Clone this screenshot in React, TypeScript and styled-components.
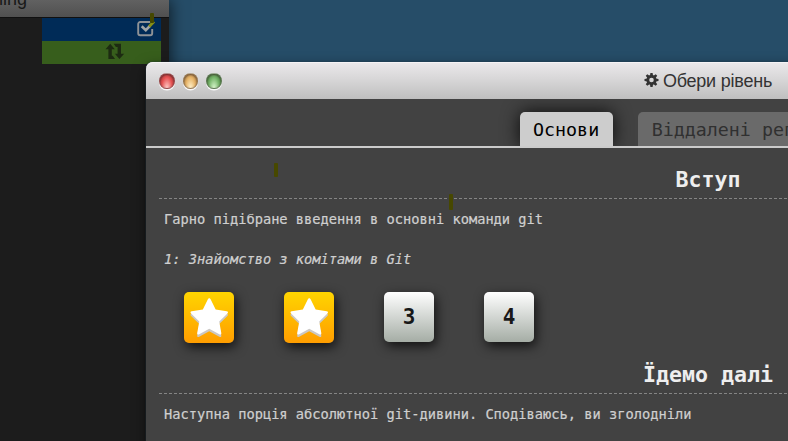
import React from "react";
import styled, { createGlobalStyle } from "styled-components";

const mono = '"DejaVu Sans Mono", monospace';
const sans = '"Liberation Sans", Arial, sans-serif';

const GlobalStyle = createGlobalStyle`
  * { box-sizing: border-box; }
  html, body { margin: 0; overflow: hidden; }
`;

const Desktop = styled.div`
  position: relative;
  width: 788px;
  height: 441px;
  overflow: hidden;
  background: #264d68;
`;

const Terminal = styled.div`
  width: 169px;
  height: 441px;
  background: #1c1c1c;
  box-shadow: 2px 0 14px rgba(0, 0, 0, 0.6);
`;

const TerminalBar = styled.div`
  height: 18px;
  overflow: hidden;
  background: linear-gradient(#616161, #505050);
  border-bottom: 1px solid #101010;
  font: 18px/20px ${sans};
  color: #181818;
`;

const TerminalTitle = styled.div`
  margin: -11px 0 0 -7px;
`;

const Command = styled.div<{ $color: string; $inset: number }>`
  display: flex;
  justify-content: flex-end;
  align-items: flex-start;
  width: 119px;
  height: 23px;
  margin-left: 42px;
  padding-right: ${(p) => p.$inset}px;
  background: ${(p) => p.$color};
  svg { display: block; }
`;

const Dialog = styled.div`
  position: absolute;
  left: 146px;
  top: 62px;
  width: 1124px;
  height: 500px;
  border-radius: 7px 7px 0 0;
  background: #424242;
  box-shadow: 0 0 1px #5684a5, 0 0 2px rgba(0, 0, 0, 0.6), 0 5px 14px rgba(0, 0, 0, 0.55);
`;

const TitleBar = styled.div`
  display: grid;
  grid-template-columns: 1fr auto 1fr;
  align-items: center;
  height: 37px;
  border-radius: 7px 7px 0 0;
  background: linear-gradient(#ebe9eb, #d6d5d6 50%, #bfbfbf);
  box-shadow: inset 0 1px #f5f3f5;
`;

const Lights = styled.div`
  display: flex;
  gap: 8px;
  padding: 1px 0 0 13px;
`;

const Light = styled.div<{ $top: string; $mid: string; $low: string }>`
  width: 15.5px;
  height: 16px;
  border: 1px solid rgba(90, 80, 80, 0.45);
  border-radius: 50%;
  background: radial-gradient(ellipse at 50% 105%, ${(p) => p.$low} 5%, ${(p) => p.$mid} 55%, ${(p) => p.$top} 100%);
  box-shadow: 0 1.5px 0.5px #f8f8f8, inset 0 1px 2px rgba(50, 30, 30, 0.65);
`;

const Title = styled.div`
  display: flex;
  align-items: center;
  gap: 4px;
  font: 18px/20px ${sans};
  letter-spacing: -0.22px;
  color: #333;
  svg { display: block; margin-top: -2px; }
`;

const Tabs = styled.div`
  display: flex;
  align-items: flex-end;
  gap: 25px;
  height: 49px;
  padding-left: 374px;
  border-bottom: 2px solid #cbcbcb;
  overflow: hidden;
`;

const Tab = styled.div<{ $active?: boolean }>`
  flex: none;
  height: 34px;
  padding: 0 13.5px 0 13px;
  border-radius: 5px 5px 0 0;
  font: 18.32px/35px ${mono};
  color: ${(p) => (p.$active ? "#000" : "#303030")};
  background: ${(p) => (p.$active ? "#cdcdcd" : "#6a6a6a")};
  box-shadow: ${(p) => (p.$active ? "0 0 18px rgba(0, 0, 0, 0.85)" : "none")};
  & + & { padding-left: 14px; }
`;

const Section = styled.section`
  height: 195px;
  padding: 12px 13px 0;
`;

const Heading = styled.h2`
  height: 39px;
  margin: 0;
  border-bottom: 1px dashed #858585;
  text-align: center;
  font: bold 21.6px/40px ${mono};
  color: #eee;
`;

const Text = styled.p<{ $italic?: boolean }>`
  height: 40px;
  margin: 0;
  padding-left: 5px;
  font: ${(p) => (p.$italic ? "italic" : "normal")} 13.7px/40px ${mono};
  color: #cfcfcf;
  -webkit-text-stroke: 0.2px #cfcfcf;
  white-space: nowrap;
`;

const Levels = styled.div`
  display: flex;
  gap: 50px;
  padding: 13px 0 0 25px;
`;

const Level = styled.div<{ $solved?: boolean }>`
  display: flex;
  align-items: center;
  justify-content: center;
  width: 50px;
  height: ${(p) => (p.$solved ? 51 : 50)}px;
  border-radius: 5px;
  background: ${(p) => (p.$solved ? "linear-gradient(#ffd500, #ff9d00)" : "linear-gradient(#fff, #a5ada5)")};
  box-shadow: 2px 4px 12px rgba(0, 0, 0, 0.75);
  font: bold 21px/50px ${mono};
  color: #181818;
`;

const Caret = styled.div<{ $x: number; $y: number; $w: number; $h: number; $color?: string }>`
  position: absolute;
  left: ${(p) => p.$x}px;
  top: ${(p) => p.$y}px;
  width: ${(p) => p.$w}px;
  height: ${(p) => p.$h}px;
  border-radius: 1px;
  background: ${(p) => p.$color ?? "#474800"};
`;

const CheckIcon = () => (
  <svg width="21" height="20" viewBox="0 0 21 20" fill="none">
    <path d="M16.2 11v4.2a2 2 0 0 1-2 2H4.2a2 2 0 0 1-2-2V6a2 2 0 0 1 2-2H14.5" stroke="#8e9296" strokeWidth="1.9" />
    <path d="M5.7 8.3 9.8 12.2l4.4-4.6" stroke="#a0a4a5" strokeWidth="2.7" />
    <path d="m13.2 8.6 4.8-5" stroke="#878f16" strokeWidth="2.9" />
  </svg>
);

const SwapIcon = () => (
  <svg width="20" height="18" viewBox="0 0 20 18" fill="#1d2b12">
    <path d="M5.2 2.8 0.5 8.2H3.4V18H10L7.8 14.8H6.8V8.2H9.8Z" />
    <path d="M8.7 2.8H16V12.8H19.2L14.4 18 9.9 12.8H12.6V6H10.9Z" />
  </svg>
);

const GearIcon = () => (
  <svg width="15" height="14" viewBox="-7 -7 14 14">
    <circle r="3.7" fill="none" stroke="#333" strokeWidth="2.8" />
    {[0, 45, 90, 135].map((angle) => (
      <path key={angle} transform={`rotate(${angle})`} d="M-1.6-4 -1.1-7H1.1L1.6-4ZM-1.6 4-1.1 7H1.1L1.6 4Z" fill="#333" />
    ))}
  </svg>
);

const starPath =
  "M19.5 1.5c.8 0 1.1.6 1.5 1.4l5 10.2 11.2 1.6c1.5.2 1.7 1.4.7 2.4l-8.3 8 2.1 11.6c.2 1.4-.8 2-2 1.3L19.5 32.5 9.3 38c-1.2.7-2.2.1-2-1.3l2.1-11.6-8.3-8c-1-1-.8-2.2.7-2.4L13 13.1l5-10.2c.4-.8.7-1.4 1.5-1.4Z";

const StarIcon = () => (
  <svg width="39" height="41" viewBox="0 0 39.5 41">
    <path d={starPath} fill="#cbc8c5" transform="translate(0 2)" />
    <path d={starPath} fill="#fff" transform="translate(0 -0.6)" />
  </svg>
);

export default function App() {
  return (
    <Desktop>
      <GlobalStyle />
      <Terminal>
        <TerminalBar>
          <TerminalTitle>hing</TerminalTitle>
        </TerminalBar>
        <Command $color="#002b57" $inset={4}><CheckIcon /></Command>
        <Command $color="#375e1c" $inset={36}><SwapIcon /></Command>
      </Terminal>
      <Caret $x={150} $y={13} $w={4} $h={10} $color="#454800" />
      <Dialog>
        <TitleBar>
          <Lights>
            <Light $top="#a52e32" $mid="#e65353" $low="#ffc9c5" />
            <Light $top="#a87c3d" $mid="#e6b368" $low="#fff0c9" />
            <Light $top="#3e7b38" $mid="#75b469" $low="#d6f5ca" />
          </Lights>
          <Title><GearIcon />Обери рівень</Title>
        </TitleBar>
        <Tabs>
          <Tab $active>Основи</Tab>
          <Tab>Віддалені репозиторії</Tab>
        </Tabs>
        <Section>
          <Heading>Вступ</Heading>
          <Text>Гарно підібране введення в основні команди git</Text>
          <Text $italic>1: Знайомство з комітами в Git</Text>
          <Levels>
            <Level $solved><StarIcon /></Level>
            <Level $solved><StarIcon /></Level>
            <Level>3</Level>
            <Level>4</Level>
          </Levels>
        </Section>
        <Section>
          <Heading>Їдемо далі</Heading>
          <Text>Наступна порція абсолютної git-дивини. Сподіваюсь, ви зголодніли</Text>
        </Section>
      </Dialog>
      <Caret $x={274} $y={163} $w={4} $h={14} />
      <Caret $x={449} $y={194} $w={4} $h={16} />
    </Desktop>
  );
}
